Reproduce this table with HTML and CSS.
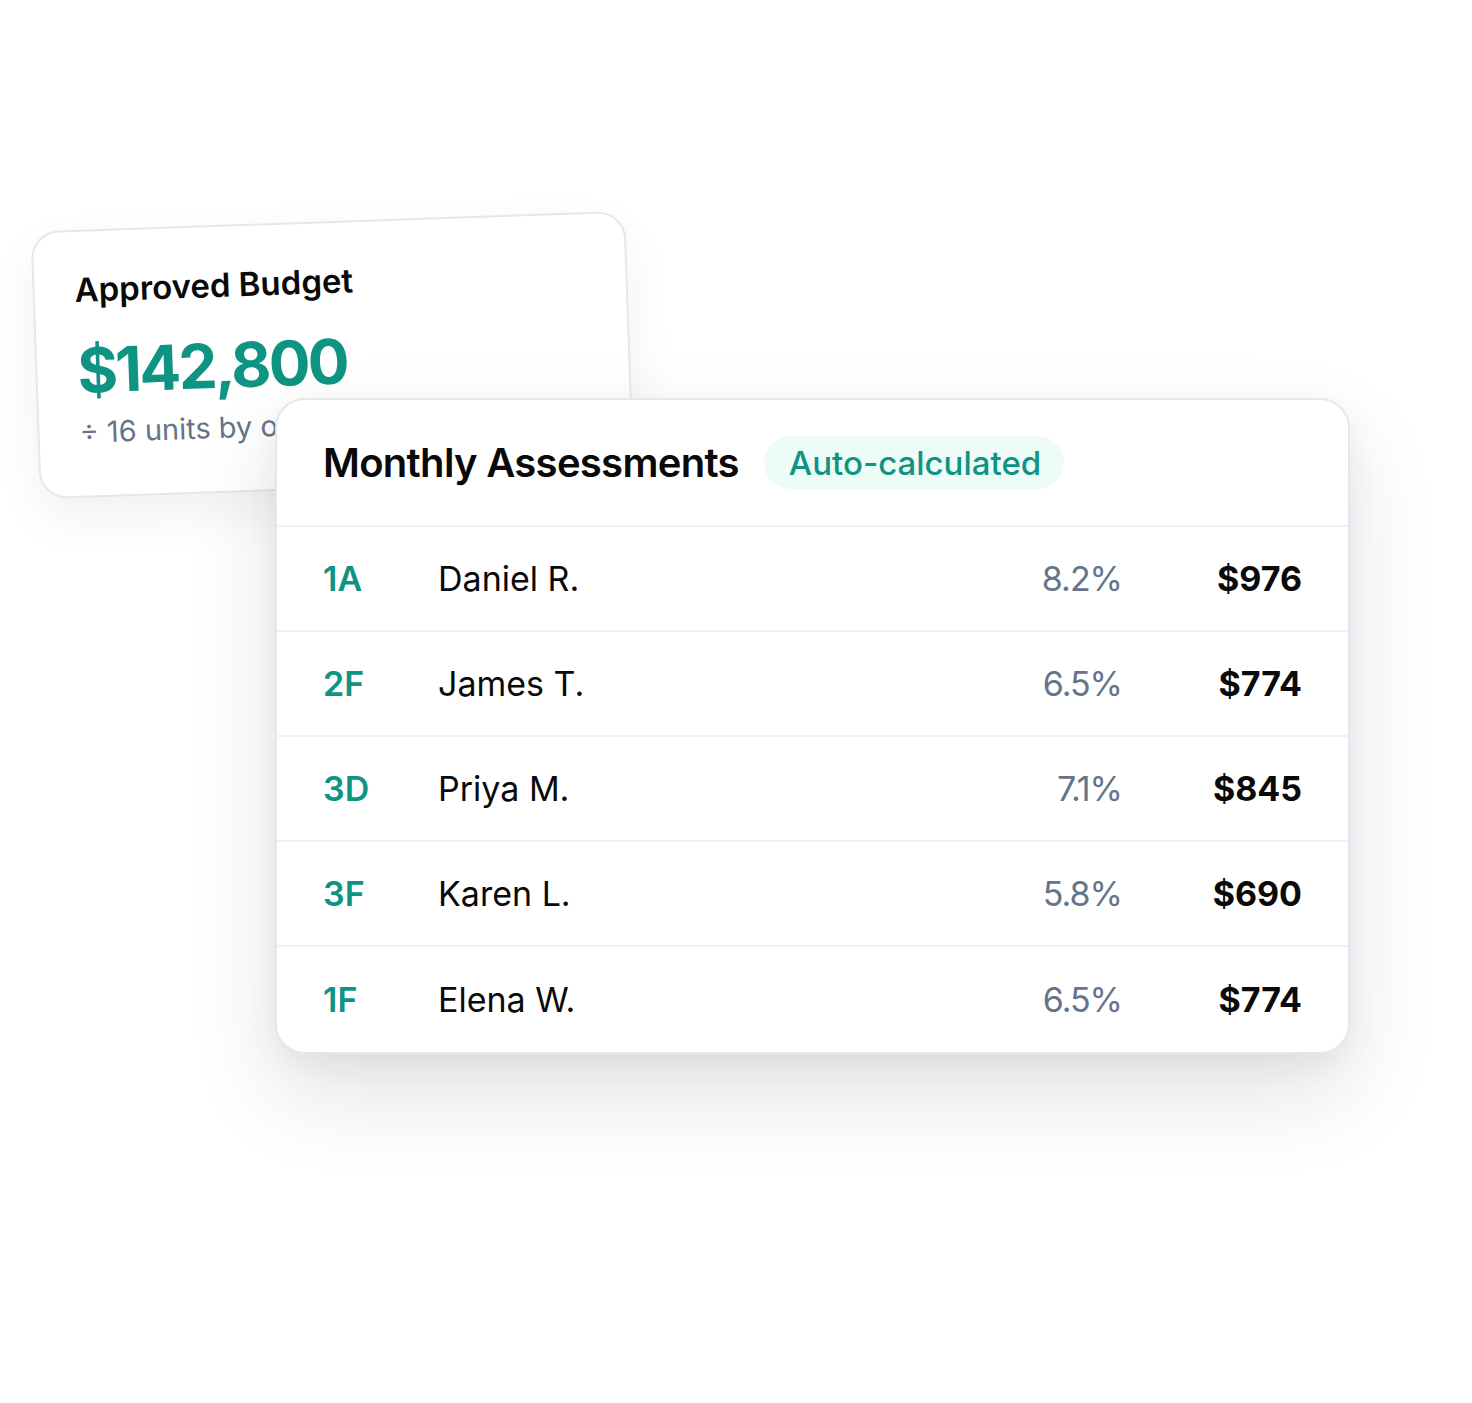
FILE: index.html
```html
<!DOCTYPE html>
<html lang="en">
<head>
<meta charset="utf-8">
<title>Monthly Assessments</title>
<link rel="stylesheet" href="styles.css">
</head>
<body>
<div class="stage">
  <section class="budget-card">
    <h2 class="budget-title">Approved Budget</h2>
    <div class="budget-amount">$142,800</div>
    <p class="budget-note">÷ 16 units by ownership share</p>
  </section>

  <section class="assess-card">
    <header class="assess-head">
      <h1 class="assess-title">Monthly Assessments</h1>
      <span class="badge">Auto-calculated</span>
    </header>
    <div class="row"><span class="unit">1A</span><span class="name">Daniel R.</span><span class="pct">8.2%</span><span class="amt">$976</span></div>
    <div class="row"><span class="unit">2F</span><span class="name">James T.</span><span class="pct">6.5%</span><span class="amt">$774</span></div>
    <div class="row"><span class="unit">3D</span><span class="name">Priya M.</span><span class="pct">7.1%</span><span class="amt">$845</span></div>
    <div class="row"><span class="unit">3F</span><span class="name">Karen L.</span><span class="pct">5.8%</span><span class="amt">$690</span></div>
    <div class="row"><span class="unit">1F</span><span class="name">Elena W.</span><span class="pct">6.5%</span><span class="amt">$774</span></div>
  </section>
</div>
</body>
</html>
```
FILE: styles.css
```css
* { box-sizing: border-box; }
html, body { margin: 0; padding: 0; background: #ffffff; }
body {
  font-family: Inter, "Noto Sans", "Liberation Sans", sans-serif;
  color: #0a0a0a;
  width: 1472px;
  height: 1403px;
  overflow: hidden;
}
.stage {
  display: grid;
  grid-template-columns: 1fr;
  grid-template-rows: auto;
}
.budget-card, .assess-card { grid-area: 1 / 1; }

.budget-card {
  align-self: start;
  margin: 221px 0 0 35px;
  width: 595px;
  height: 268px;
  background: #ffffff;
  border: 2px solid #e2e8f0;
  border-radius: 28px;
  transform: rotate(-2deg);
  padding: 38px 0 0 40px;
  overflow: hidden;
  box-shadow: 0 20px 50px rgba(15, 23, 42, 0.06);
}
.budget-title {
  margin: 0;
  font-size: 33px;
  font-weight: 600;
  letter-spacing: 0;
  line-height: 40px;
}
.budget-amount {
  margin-top: 26px;
  font-size: 62px;
  font-weight: 700;
  color: #0f9484;
  letter-spacing: -2.7px;
  line-height: 70px;
}
.budget-note {
  margin: 10px 0 0;
  font-size: 29px;
  color: #64748b;
  line-height: 34px;
  white-space: nowrap;
}

.assess-card {
  position: relative;
  z-index: 1;
  margin: 398px 0 0 275px;
  width: 1075px;
  align-self: start;
  background: #ffffff;
  border: 2px solid #e2e8f0;
  border-radius: 30px;
  overflow: hidden;
  box-shadow: 0 40px 90px rgba(15, 23, 42, 0.12), 0 10px 30px rgba(15, 23, 42, 0.05);
}
.assess-head {
  display: flex;
  align-items: center;
  gap: 25px;
  height: 127px;
  padding: 0 46px;
  border-bottom: 2px solid #eef2f6;
}
.assess-title {
  margin: 0;
  font-size: 40px;
  font-weight: 600;
  letter-spacing: -0.7px;
}
.badge {
  display: inline-flex;
  align-items: center;
  height: 53px;
  padding: 0 23px 0 25px;
  border-radius: 27px;
  background: #edfcf7;
  color: #0f9484;
  font-size: 33px;
  font-weight: 500;
  letter-spacing: 0;
}
.row {
  display: grid;
  grid-template-columns: 115px 1fr auto 180px;
  align-items: center;
  height: 105px;
  padding: 0 46px 0 46px;
  border-bottom: 2px solid #eef2f6;
  font-size: 34px;
  letter-spacing: 0;
}
.row:last-child { border-bottom: 0; }
.unit { color: #0f9484; font-weight: 600; }
.name { font-weight: 400; }
.pct { color: #64748b; text-align: right; letter-spacing: -1px; }
.amt { font-weight: 700; text-align: right; }
```
